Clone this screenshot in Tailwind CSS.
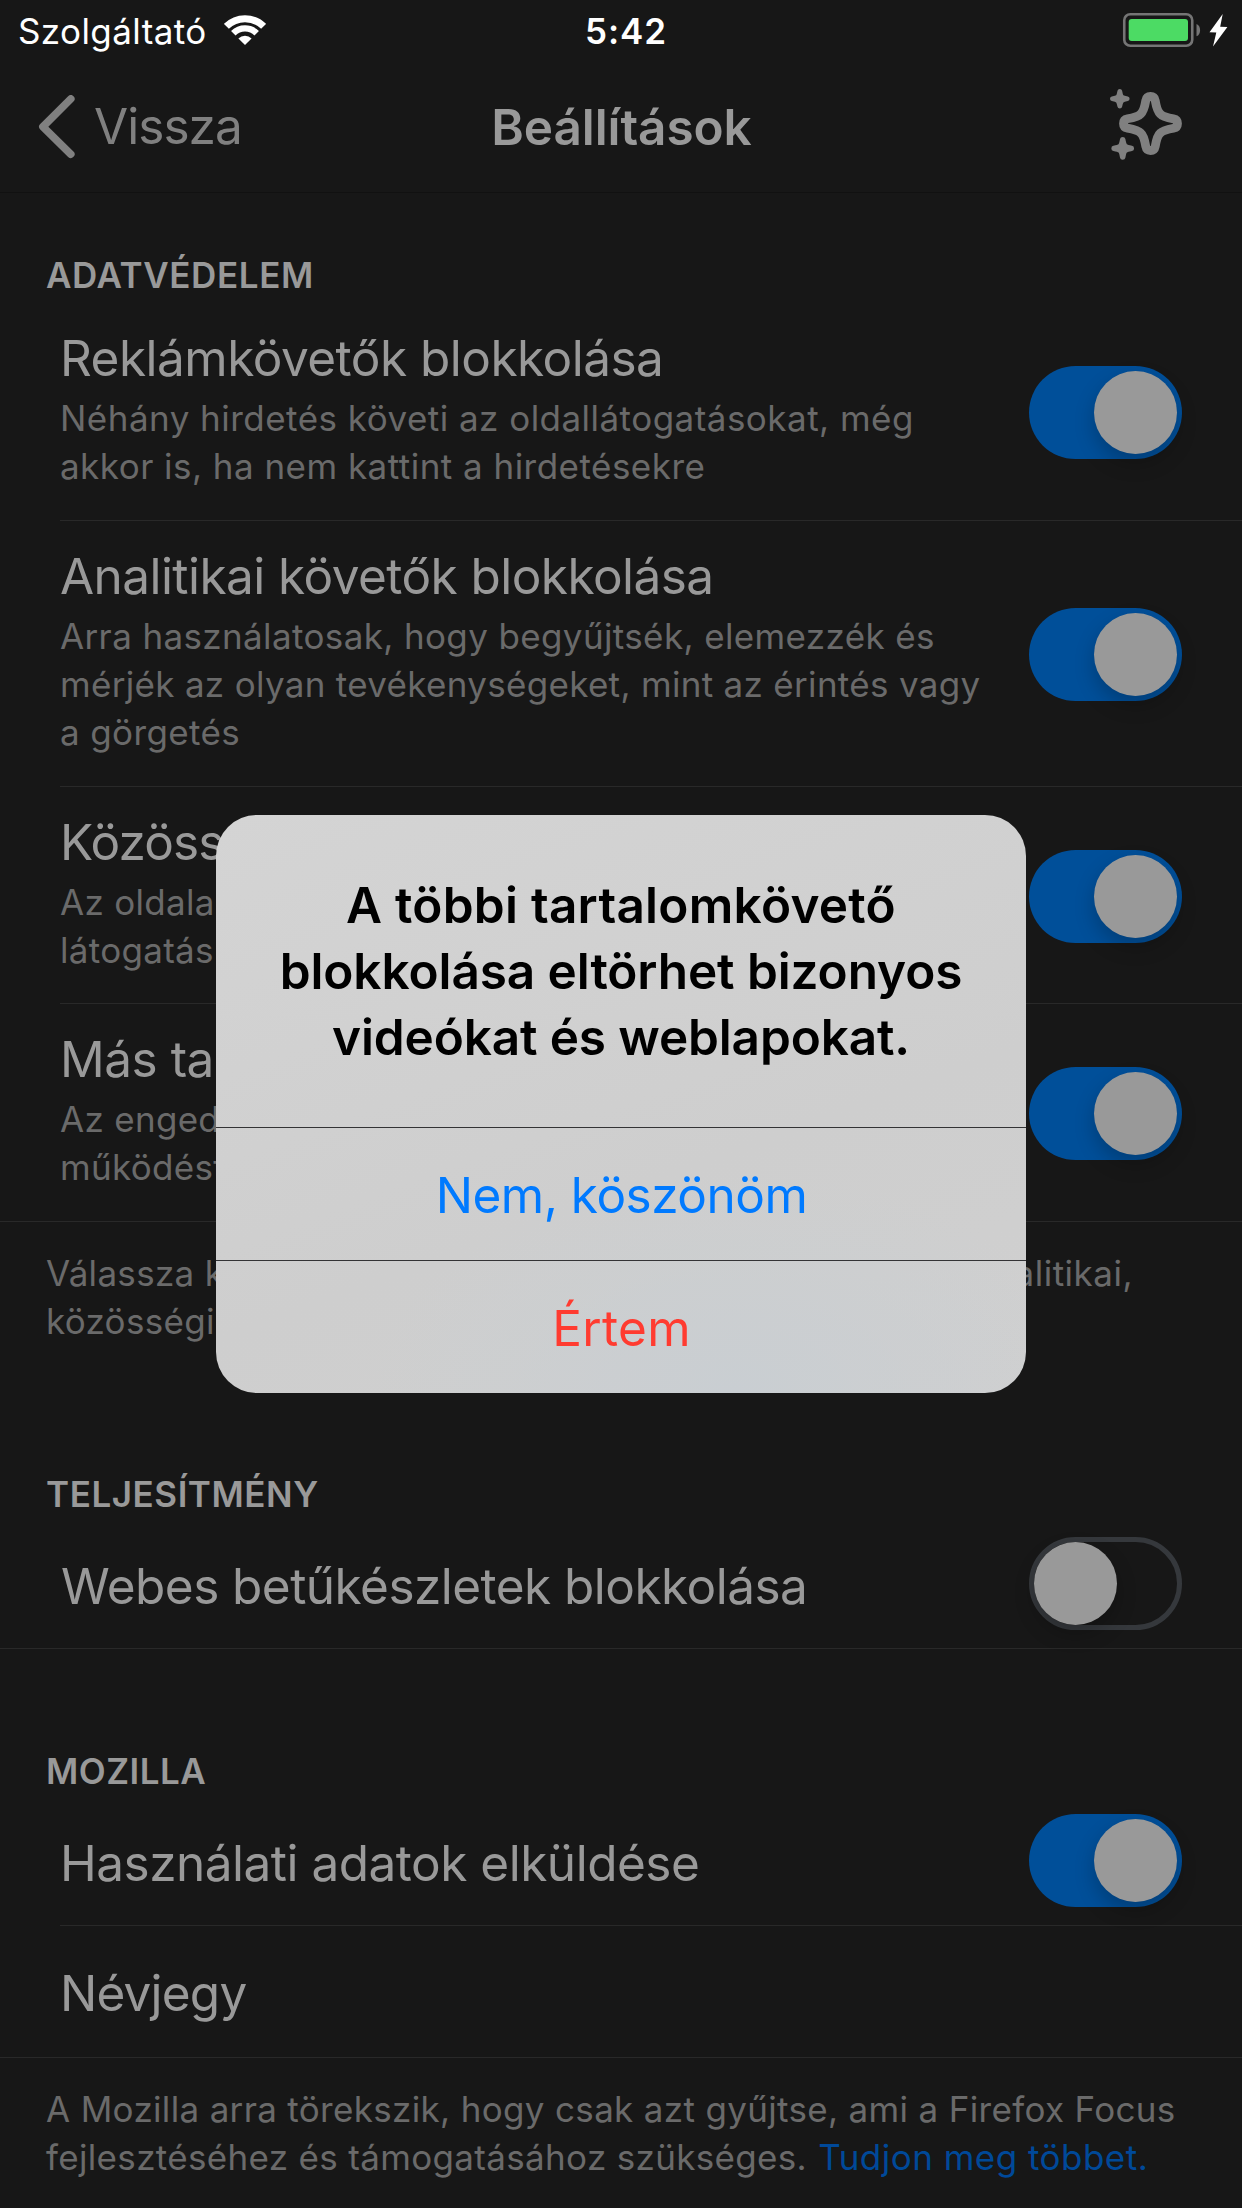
<!DOCTYPE html>
<html lang="hu">
<head>
<meta charset="utf-8">
<title>Beállítások</title>
<script src="https://cdn.jsdelivr.net/npm/@tailwindcss/browser@4"></script>
</head>
<body class="relative h-[2208px] w-[1242px] overflow-hidden bg-[#171717] font-[Inter,'Liberation_Sans',sans-serif] text-[35px] leading-[48px] text-[#6a6a6a] whitespace-nowrap">

<!-- Status bar -->
<div class="grid h-[60px] grid-cols-[1fr_auto_1fr] pt-[7px] text-white">
  <div class="flex items-start gap-[17px] pl-[18px]">
    <span class="tracking-[0.4px]">Szolgáltató</span>
    <svg class="mt-2 h-[30px] w-[42px]" viewBox="0 0 42 30" fill="none" stroke="white">
      <path d="M2.4 11.4A26.3 26.3 0 0 1 39.6 11.4" stroke-width="7"/>
      <path d="M9.3 18.3A16.5 16.5 0 0 1 32.7 18.3" stroke-width="6.3"/>
      <path d="M21 30L14.4 23.4A9.3 9.3 0 0 1 27.6 23.4Z" fill="white" stroke="none"/>
    </svg>
  </div>
  <span class="pl-2.5 font-semibold tracking-[0.9px]">5:42</span>
  <div class="flex justify-end pr-[14px]">
    <svg class="mt-[5px] h-[36px] w-[107px]" viewBox="0 0 107 36">
      <rect x="3.25" y="2.25" width="68" height="31.5" rx="6" fill="none" stroke="#757575" stroke-width="2.6"/>
      <rect x="7.7" y="7" width="59.3" height="22" rx="3" fill="#4cdb64"/>
      <path d="M75.5 12C80.3 13.5 80.3 22.8 75.5 24.3Z" fill="#757575"/>
      <path d="M101.7 2L88.5 20.3L95.3 20.6L92 34.5L106.4 15.1L99.2 14.8Z" fill="white"/>
    </svg>
  </div>
</div>

<!-- Navigation bar -->
<div class="grid h-[133px] grid-cols-[1fr_auto_1fr] border-b border-[#111111] text-[49.5px] leading-[60px]">
  <div class="flex items-start pt-[35px] pl-9 text-[#808080]">
    <svg class="h-[64px] w-[39px]" viewBox="0 0 39 64" fill="none" stroke="#808080" stroke-width="7.6" stroke-linecap="round" stroke-linejoin="round">
      <path d="M34.8 3.9L6.9 31.7L34.8 59.2"/>
    </svg>
    <span class="mt-px pl-[19px] tracking-[-0.95px]">Vissza</span>
  </div>
  <h1 class="pt-[37px] pl-px font-semibold tracking-[-0.08px] text-[#999999]">Beállítások</h1>
  <div class="flex items-start justify-end pt-7 pr-[59px]">
    <svg class="h-[74px] w-[73px]" viewBox="0 0 73 74">
      <g transform="translate(40.5 35.5)" fill="none" stroke="#808080" stroke-width="8.8" stroke-linejoin="round">
        <path d="M0 -27C2.8 -27 4.2 -25.6 4.7 -23C6 -15.5 7 -12 9.7 -9.7C12 -7 15.5 -6 23 -4.7C25.6 -4.2 27 -2.8 27 0C27 2.8 25.6 4.2 23 4.7C15.5 6 12 7 9.7 9.7C7 12 6 15.5 4.7 23C4.2 25.6 2.8 27 0 27C-2.8 27 -4.2 25.6 -4.7 23C-6 15.5 -7 12 -9.7 9.7C-12 7 -15.5 6 -23 4.7C-25.6 4.2 -27 2.8 -27 0C-27 -2.8 -25.6 -4.2 -23 -4.7C-15.5 -6 -12 -7 -9.7 -9.7C-7 -12 -6 -15.5 -4.7 -23C-4.2 -25.6 -2.8 -27 0 -27Z"/>
      </g>
      <g transform="translate(9.8 10.8)" fill="#808080">
        <path id="spark" d="M0 -9.8Q2 -9.8 2.3 -8Q3 -4.2 3.6 -3.6Q4.2 -3 8 -2.3Q9.8 -2 9.8 0Q9.8 2 8 2.3Q4.2 3 3.6 3.6Q3 4.2 2.3 8Q2 9.8 0 9.8Q-2 9.8 -2.3 8Q-3 4.2 -3.6 3.6Q-4.2 3 -8 2.3Q-9.8 2 -9.8 0Q-9.8 -2 -8 -2.3Q-4.2 -3 -3.6 -3.6Q-3 -4.2 -2.3 -8Q-2 -9.8 0 -9.8Z"/>
      </g>
      <use href="#spark" transform="translate(12.7 60.4) scale(1.16)" fill="#808080"/>
    </svg>
  </div>
</div>

<!-- Privacy -->
<h2 class="mt-[58px] pl-[46px] font-semibold tracking-[0.6px] text-[#999999]">ADATVÉDELEM</h2>
<div class="mt-1">
  <div class="ml-[60px] flex h-[218px] items-center border-b border-[#292929]">
    <div class="h-full grow pt-[25px]">
      <div class="text-[49.5px] leading-[60px] tracking-[-0.52px] text-[#999999]">Reklámkövetők blokkolása</div>
      <p class="mt-1.5 tracking-[0.47px]">Néhány hirdetés követi az oldallátogatásokat, még<br>akkor is, ha nem kattint a hirdetésekre</p>
    </div>
    <div class="mt-0.5 mr-[60px] flex h-[93px] w-[153px] justify-end rounded-full bg-[#004f99] p-[5px]"><div class="size-[83px] rounded-full bg-[#999999] shadow-[0_9px_20px_rgba(0,0,0,0.22)]"></div></div>
  </div>
  <div class="ml-[60px] flex h-[266px] items-center border-b border-[#292929]">
    <div class="h-full grow pt-[25px]">
      <div class="text-[49.5px] leading-[60px] tracking-[-0.56px] text-[#999999]">Analitikai követők blokkolása</div>
      <p class="mt-1.5 tracking-[0.37px]">Arra használatosak, hogy begyűjtsék, elemezzék és<br><span class="tracking-[0.31px]">mérjék az olyan tevékenységeket, mint az érintés vagy</span><br>a görgetés</p>
    </div>
    <div class="mt-0.5 mr-[60px] flex h-[93px] w-[153px] justify-end rounded-full bg-[#004f99] p-[5px]"><div class="size-[83px] rounded-full bg-[#999999] shadow-[0_9px_20px_rgba(0,0,0,0.22)]"></div></div>
  </div>
  <div class="ml-[60px] flex h-[217px] items-center border-b border-[#292929]">
    <div class="h-full grow pt-[25px]">
      <div class="text-[49.5px] leading-[60px] tracking-[-0.9px] text-[#999999]">Közöss</div>
      <p class="mt-1.5 tracking-[0.3px]">Az oldala<br>látogatás</p>
    </div>
    <div class="mt-0.5 mr-[60px] flex h-[93px] w-[153px] justify-end rounded-full bg-[#004f99] p-[5px]"><div class="size-[83px] rounded-full bg-[#999999] shadow-[0_9px_20px_rgba(0,0,0,0.22)]"></div></div>
  </div>
  <div class="flex h-[218px] items-center border-b border-[#292929] pl-[60px]">
    <div class="h-full grow pt-[25px]">
      <div class="text-[49.5px] leading-[60px] tracking-[-0.48px] text-[#999999]">Más ta</div>
      <p class="mt-1.5 tracking-[0.3px]">Az enged<br>működést</p>
    </div>
    <div class="mt-0.5 mr-[60px] flex h-[93px] w-[153px] justify-end rounded-full bg-[#004f99] p-[5px]"><div class="size-[83px] rounded-full bg-[#999999] shadow-[0_9px_20px_rgba(0,0,0,0.22)]"></div></div>
  </div>
</div>
<div class="mt-[27px] pr-[109px] pl-[46px] tracking-[0.3px]">
  <div class="flex justify-between"><span>Válassza k</span><span class="tracking-[0.5px]">alitikai,</span></div>
  <div>közösségi</div>
</div>

<!-- Performance -->
<h2 class="mt-[125px] pl-[46px] font-semibold tracking-[0.55px] text-[#999999]">TELJESÍTMÉNY</h2>
<div class="flex h-[131px] items-center border-b border-[#292929] pl-[60px]">
  <div class="h-full grow pt-[38px] pl-px text-[49.5px] leading-[60px] tracking-[-0.54px] text-[#999999]">Webes betűkészletek blokkolása</div>
  <div class="mt-px mr-[60px] flex h-[93px] w-[153px] justify-start rounded-full border-5 border-[#35383c]"><div class="size-[83px] rounded-full bg-[#999999] shadow-[0_9px_20px_rgba(0,0,0,0.22)]"></div></div>
</div>

<!-- Mozilla -->
<h2 class="mt-[98px] pl-[46px] font-semibold tracking-[0.5px] text-[#999999]">MOZILLA</h2>
<div class="ml-[60px] flex h-[131px] items-center border-b border-[#292929]">
  <div class="h-full grow pt-[38px] text-[49.5px] leading-[60px] tracking-[-0.5px] text-[#999999]">Használati adatok elküldése</div>
  <div class="mt-px mr-[60px] flex h-[93px] w-[153px] justify-end rounded-full bg-[#004f99] p-[5px]"><div class="size-[83px] rounded-full bg-[#999999] shadow-[0_9px_20px_rgba(0,0,0,0.22)]"></div></div>
</div>
<div class="h-[132px] border-b border-[#292929] pt-[37px] pl-[60px] text-[49.5px] leading-[60px] tracking-[-0.8px] text-[#999999]">Névjegy</div>
<p class="mt-[27px] pl-[46px] tracking-[0.33px]">A Mozilla arra törekszik, hogy csak azt gyűjtse, ami a Firefox Focus<br>fejlesztéséhez és támogatásához szükséges. <a class="pl-px tracking-[0.48px] text-[#004999]">Tudjon meg többet.</a></p>

<!-- Alert -->
<div class="absolute top-[815px] left-[216px] h-[578px] w-[810px] overflow-hidden rounded-[41px] bg-[#d0d0d0] bg-[radial-gradient(ellipse_360px_220px_at_64%_100%,#c9ced2,transparent),linear-gradient(160deg,#d4d4d4,#cecece_60%,#d0d0d0)] text-center text-[49.5px] leading-[60px]">
  <div class="h-[312px] pt-[57px] leading-[66px] font-semibold text-black">
    <div class="tracking-[0.27px]">A többi tartalomkövető</div>
    <div class="tracking-[-0.08px]">blokkolása eltörhet bizonyos</div>
    <div class="tracking-[-0.13px]">videókat és weblapokat.</div>
  </div>
  <div class="h-[133px] border-t border-[#333335] pt-[37px] pl-px tracking-[-0.5px] text-[#007aff]">Nem, köszönöm</div>
  <div class="h-[133px] border-t border-[#333335] pt-[37px] pl-px tracking-[0.3px] text-[#ff3b30]">Értem</div>
</div>
</body>
</html>
